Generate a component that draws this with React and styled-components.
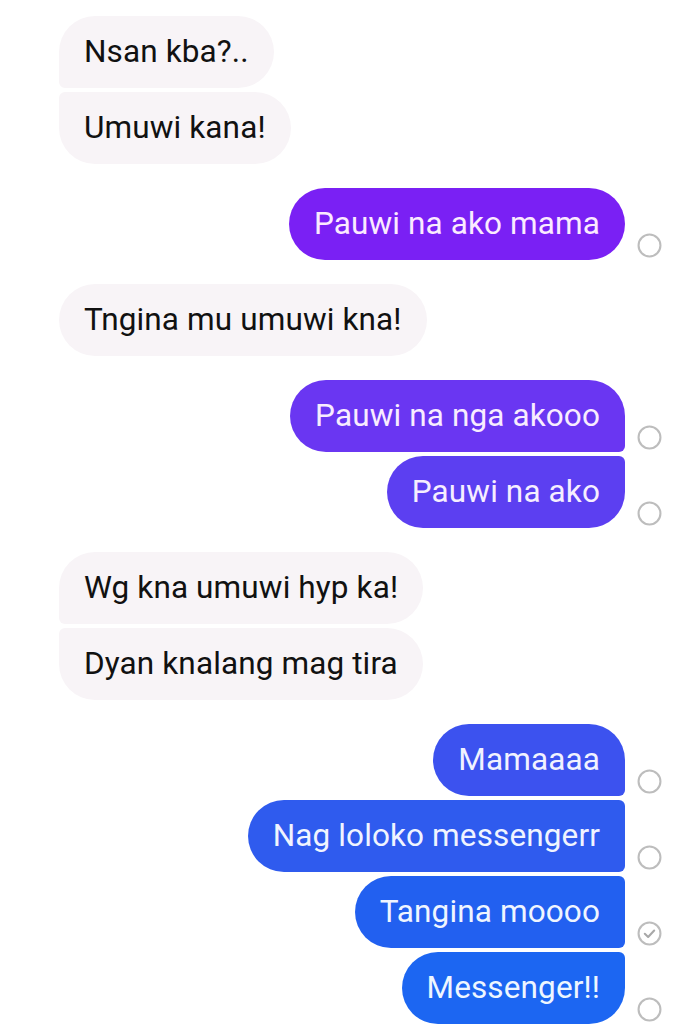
import React from "react";
import styled, { createGlobalStyle, css } from "styled-components";

const Global = createGlobalStyle`
  html, body { margin: 0; padding: 0; background: #ffffff; }
  body { font-family: Roboto, "Noto Sans", sans-serif; }
`;

const Thread = styled.div`
  width: 675px;
  height: 1035px;
  overflow: hidden;
  box-sizing: border-box;
  padding: 16px 13px 0 59px;
  display: flex;
  flex-direction: column;
  gap: 24px;
  background: #fff;
`;

const Group = styled.div`
  display: flex;
  flex-direction: column;
  gap: 4px;
  align-items: ${(p) => (p.$mine ? "flex-end" : "flex-start")};
`;

const Row = styled.div`
  display: flex;
  align-items: flex-end;
  gap: 12px;
`;

const BIG = 36;
const SMALL = 6;

const Bubble = styled.div`
  box-sizing: border-box;
  height: 72px;
  padding: 0 25px;
  display: flex;
  align-items: center;
  font-family: Roboto, "Noto Sans", sans-serif;
  font-size: 31.5px;
  line-height: 36px;
  white-space: nowrap;
  letter-spacing: 0.12px;
  ${(p) =>
    p.$mine
      ? css`
          color: ${p.$ink};
          background: ${p.$bg};
          border-radius: ${BIG}px
            ${p.$pos === "first" || p.$pos === "single" ? BIG : SMALL}px
            ${p.$pos === "last" || p.$pos === "single" ? BIG : SMALL}px
            ${BIG}px;
        `
      : css`
          color: #111111;
          background: #f8f4f7;
          border-radius: ${p.$pos === "first" || p.$pos === "single" ? BIG : SMALL}px
            ${BIG}px ${BIG}px
            ${p.$pos === "last" || p.$pos === "single" ? BIG : SMALL}px;
        `}
`;

const Status = styled.svg`
  width: 25px;
  height: 25px;
  flex: none;
  margin-bottom: 2px;
`;

const StatusIcon = ({ seen }) => (
  <Status viewBox="0 0 24 24">
    <circle cx="12" cy="12" r="10.5" fill="none" stroke="#bdbdbd" strokeWidth="2" />
    {seen && (
      <path
        d="M7.5 12.3 L10.7 15.3 L16.5 9.2"
        fill="none"
        stroke="#a8a8a8"
        strokeWidth="2"
        strokeLinecap="round"
        strokeLinejoin="round"
      />
    )}
  </Status>
);

const groups = [
  { mine: false, msgs: [{ t: "Nsan kba?.." }, { t: "Umuwi kana!" }] },
  { mine: true, msgs: [{ t: "Pauwi na ako mama", bg: "#7a20f4", ink: "#fbeaff" }] },
  { mine: false, msgs: [{ t: "Tngina mu umuwi kna!" }] },
  {
    mine: true,
    msgs: [
      { t: "Pauwi na nga akooo", bg: "#6a36f2", ink: "#f8ecff" },
      { t: "Pauwi na ako", bg: "#5c3ff1", ink: "#f6eeff" },
    ],
  },
  { mine: false, msgs: [{ t: "Wg kna umuwi hyp ka!" }, { t: "Dyan knalang mag tira" }] },
  {
    mine: true,
    msgs: [
      { t: "Mamaaaa", bg: "#3c52ef", ink: "#f1f2ff" },
      { t: "Nag loloko messengerr", bg: "#2f5bee", ink: "#f0f4ff" },
      { t: "Tangina moooo", bg: "#2260f0", ink: "#eff5ff", seen: true },
      { t: "Messenger!!", bg: "#1c66f2", ink: "#eef6ff" },
    ],
  },
];

const posOf = (i, n) => (n === 1 ? "single" : i === 0 ? "first" : i === n - 1 ? "last" : "middle");

export default function App() {
  return (
    <>
      <Global />
      <Thread>
        {groups.map((g, gi) => (
          <Group key={gi} $mine={g.mine}>
            {g.msgs.map((m, i) => {
              const pos = posOf(i, g.msgs.length);
              return g.mine ? (
                <Row key={i}>
                  <Bubble $mine $pos={pos} $bg={m.bg} $ink={m.ink}>
                    {m.t}
                  </Bubble>
                  <StatusIcon seen={m.seen} />
                </Row>
              ) : (
                <Bubble key={i} $pos={pos}>
                  {m.t}
                </Bubble>
              );
            })}
          </Group>
        ))}
      </Thread>
    </>
  );
}
